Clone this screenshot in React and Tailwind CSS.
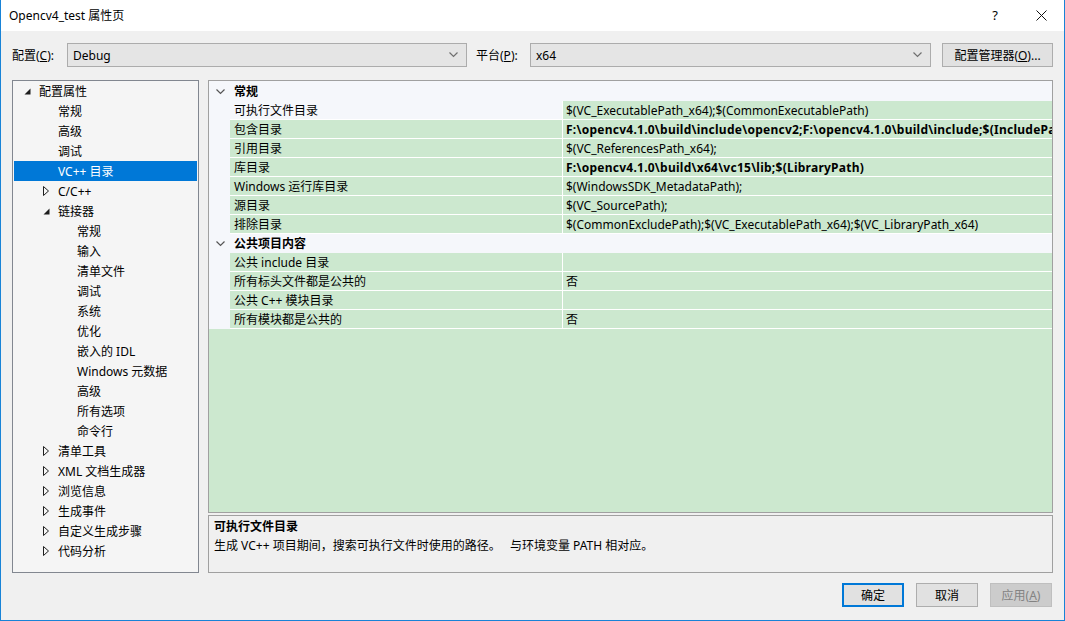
import React from 'react';

// 属性页窗口（VS 项目属性）
const font = "font-['Noto_Sans','Noto_Sans_CJK_SC',sans-serif]";

const Expanded = () => (
  <svg width="7" height="7" viewBox="0 0 7 7" className="shrink-0">
    <polygon points="6.5,0.5 6.5,6.5 0.5,6.5" fill="#1e1e1e" />
  </svg>
);

const Collapsed = () => (
  <svg width="6" height="10" viewBox="0 0 6 10" className="shrink-0">
    <polygon points="0.5,0.5 5.5,5 0.5,9.5" fill="none" stroke="#1e1e1e" strokeWidth="1" />
  </svg>
);

const Chevron = ({ color = '#606060' }) => (
  <svg width="9" height="6" viewBox="0 0 9 6">
    <polyline points="0.5,0.5 4.5,4.5 8.5,0.5" fill="none" stroke={color} strokeWidth="1.2" />
  </svg>
);

const spacer = ['w-[10px]', 'w-[29px]', 'w-[48px]'];

const TreeItem = ({ level, arrow, label, selected }) => (
  <div className={`h-[20px] flex items-center mx-px ${selected ? 'bg-[#0078d7] text-white' : 'text-black'}`}>
    <div className={`${spacer[level]} shrink-0`}></div>
    <div className="w-[15px] shrink-0 flex items-center">
      {arrow === 'open' && <Expanded />}
      {arrow === 'closed' && <Collapsed />}
    </div>
    <span className="whitespace-nowrap">{label}</span>
  </div>
);

const tree = [
  [0, 'open', '配置属性'],
  [1, null, '常规'],
  [1, null, '高级'],
  [1, null, '调试'],
  [1, null, 'VC++ 目录', true],
  [1, 'closed', 'C/C++'],
  [1, 'open', '链接器'],
  [2, null, '常规'],
  [2, null, '输入'],
  [2, null, '清单文件'],
  [2, null, '调试'],
  [2, null, '系统'],
  [2, null, '优化'],
  [2, null, '嵌入的 IDL'],
  [2, null, 'Windows 元数据'],
  [2, null, '高级'],
  [2, null, '所有选项'],
  [2, null, '命令行'],
  [1, 'closed', '清单工具'],
  [1, 'closed', 'XML 文档生成器'],
  [1, 'closed', '浏览信息'],
  [1, 'closed', '生成事件'],
  [1, 'closed', '自定义生成步骤'],
  [1, 'closed', '代码分析'],
];

const SectionHeader = ({ label }) => (
  <div className="h-[19px] shrink-0 flex items-center bg-[#f5f7fb]">
    <div className="w-[21px] shrink-0 flex items-center justify-center pl-[2px]">
      <Chevron color="#555" />
    </div>
    <span className="font-bold pl-[4px]">{label}</span>
  </div>
);

const PropRow = ({ name, value, bold, selected }) => (
  <div className="h-[19px] shrink-0 flex bg-[#f5f7fb] leading-[18px] min-w-0">
    <div className="w-[21px] shrink-0"></div>
    <div className={`w-[332px] shrink-0 pl-[4px] pt-px border-b border-white whitespace-nowrap ${selected ? 'bg-[#f5f7fb]' : 'bg-[#cce8cf]'}`}>
      {name}
    </div>
    <div className={`flex-1 min-w-0 pl-[3px] pt-px bg-[#cce8cf] border-l border-b border-white whitespace-nowrap overflow-hidden ${bold ? 'font-bold tracking-[0.25px]' : ''}`}>
      {value}
    </div>
  </div>
);

const Combo = ({ value, w }) => (
  <div className={`${w} h-[24px] border border-[#acacac] bg-[#e5e5e5] flex items-center justify-between pl-[5px] pr-[8px]`}>
    <span>{value}</span>
    <Chevron color="#707070" />
  </div>
);

export default function App() {
  return (
    <div className={`w-[1065px] h-[621px] flex flex-col border-l border-r border-b border-[#1883d7] text-[12px] leading-[19px] text-black bg-[#f0f0f0] overflow-hidden ${font}`}>
      {/* 标题栏 */}
      <div className="h-[31px] bg-white flex items-center pl-[8px] shrink-0">
        <span className="flex-1">Opencv4_test 属性页</span>
        <span className="w-[46px] text-center text-[13px]">?</span>
        <div className="w-[46px] flex justify-center">
          <svg width="11" height="11" viewBox="0 0 11 11">
            <path d="M0.5 0.5 L10.5 10.5 M10.5 0.5 L0.5 10.5" stroke="#111" strokeWidth="1" />
          </svg>
        </div>
      </div>

      <div className="flex-1 flex flex-col px-[11px]">
        {/* 配置 / 平台 */}
        <div className="mt-[12px] h-[24px] flex items-center">
          <span className="w-[55px]">配置(<u>C</u>):</span>
          <Combo value="Debug" w="w-[400px]" />
          <span className="ml-[9px] w-[54px]">平台(<u>P</u>):</span>
          <Combo value="x64" w="w-[401px]" />
          <div className="ml-[11px] w-[111px] h-[24px] border border-[#adadad] bg-[#e1e1e1] flex items-center justify-center">
            配置管理器(<u>O</u>)...
          </div>
        </div>

        <div className="mt-[13px] h-[493px] flex">
          {/* 左侧树 */}
          <div className="w-[187px] shrink-0 border border-[#828790] bg-[#f5f5f5] flex flex-col">
            {tree.map(([level, arrow, label, selected], i) => (
              <TreeItem key={i} level={level} arrow={arrow} label={label} selected={selected} />
            ))}
          </div>

          {/* 右侧属性网格 */}
          <div className="ml-[9px] w-[846px] min-w-0 flex flex-col">
            <div className="h-[433px] border border-[#a0a0a0] flex flex-col bg-[#cce8cf] overflow-hidden">
              <div className="h-px shrink-0 bg-[#f5f7fb]"></div>
              <SectionHeader label="常规" />
              <PropRow name="可执行文件目录" value="$(VC_ExecutablePath_x64);$(CommonExecutablePath)" selected />
              <PropRow name="包含目录" value="F:\opencv4.1.0\build\include\opencv2;F:\opencv4.1.0\build\include;$(IncludePath)" bold />
              <PropRow name="引用目录" value="$(VC_ReferencesPath_x64);" />
              <PropRow name="库目录" value="F:\opencv4.1.0\build\x64\vc15\lib;$(LibraryPath)" bold />
              <PropRow name="Windows 运行库目录" value="$(WindowsSDK_MetadataPath);" />
              <PropRow name="源目录" value="$(VC_SourcePath);" />
              <PropRow name="排除目录" value="$(CommonExcludePath);$(VC_ExecutablePath_x64);$(VC_LibraryPath_x64)" />
              <SectionHeader label="公共项目内容" />
              <PropRow name="公共 include 目录" value="" />
              <PropRow name="所有标头文件都是公共的" value="否" />
              <PropRow name="公共 C++ 模块目录" value="" />
              <PropRow name="所有模块都是公共的" value="否" />
              <div className="flex-1 bg-[#cce8cf]"></div>
            </div>

            {/* 描述 */}
            <div className="mt-[2px] flex-1 border border-[#a0a0a0] bg-[#f0f0f0] px-[5px] pt-[1px]">
              <div className="font-bold">可执行文件目录</div>
              <div>生成 VC++ 项目期间，搜索可执行文件时使用的路径。&nbsp;&nbsp; 与环境变量 PATH 相对应。</div>
            </div>
          </div>
        </div>

        {/* 按钮 */}
        <div className="mt-[10px] h-[24px] flex justify-end pr-[1px] gap-[12px]">
          <div className="w-[62px] border-2 border-[#0078d7] bg-[#e1e1e1] flex items-center justify-center">确定</div>
          <div className="w-[62px] border border-[#adadad] bg-[#e1e1e1] flex items-center justify-center">取消</div>
          <div className="w-[62px] border border-[#bfbfbf] bg-[#cccccc] text-[#838383] flex items-center justify-center">应用(<u>A</u>)</div>
        </div>
      </div>
    </div>
  );
}
